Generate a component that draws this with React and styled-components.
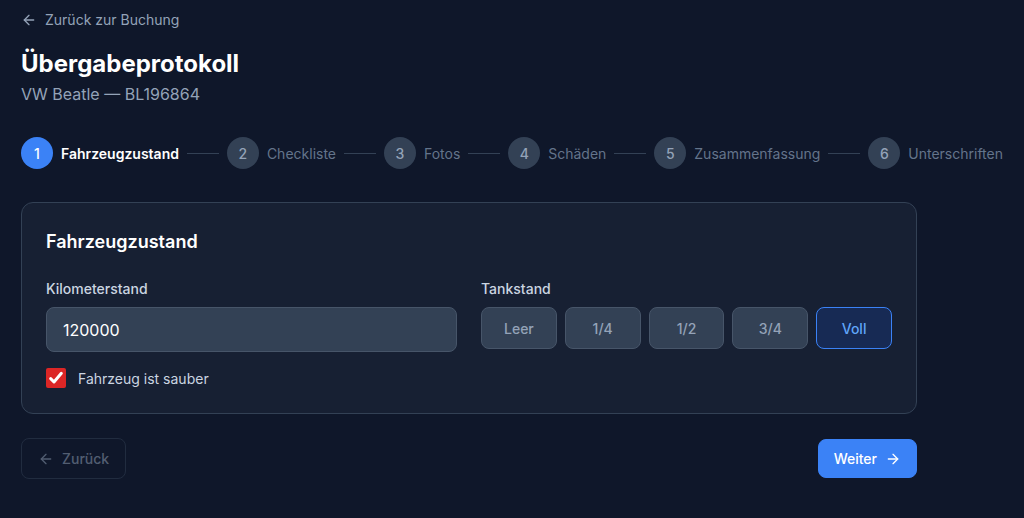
import React from "react";
import styled, { createGlobalStyle } from "styled-components";

const GlobalStyle = createGlobalStyle`
  html, body {
    margin: 0;
    background: #0f172a;
    font-family: Inter, "Noto Sans", sans-serif;
    color: #f1f5f9;
  }
  * { box-sizing: border-box; }
`;

const Page = styled.div`
  min-height: 518px;
  padding: 12px 21px 20px;
`;

const BackLink = styled.a`
  display: inline-flex;
  align-items: center;
  gap: 8px;
  font-size: 14px;
  line-height: 16px;
  color: #94a3b8;
  text-decoration: none;
`;

const Title = styled.h1`
  margin: 16px 0 0;
  font-size: 24px;
  line-height: 32px;
  font-weight: 700;
  color: #ffffff;
`;

const Subtitle = styled.p`
  margin: 2px 0 0;
  font-size: 16px;
  line-height: 24px;
  color: #94a3b8;
`;

const Stepper = styled.div`
  display: flex;
  align-items: center;
  gap: 8px;
  margin-top: 31px;
  white-space: nowrap;
`;

const Step = styled.div`
  display: flex;
  align-items: center;
  gap: 8px;
`;

const StepNumber = styled.span`
  width: 32px;
  height: 32px;
  border-radius: 50%;
  display: flex;
  align-items: center;
  justify-content: center;
  font-size: 14px;
  font-weight: 500;
  background: ${p => (p.$active ? "#3b82f6" : "#334155")};
  color: ${p => (p.$active ? "#ffffff" : "#94a3b8")};
`;

const StepLabel = styled.span`
  font-size: 14px;
  font-weight: ${p => (p.$active ? 600 : 400)};
  color: ${p => (p.$active ? "#ffffff" : "#64748b")};
`;

const StepLine = styled.span`
  width: 32px;
  height: 1px;
  background: #334155;
`;

const Card = styled.section`
  max-width: 896px;
  margin-top: 33px;
  padding: 25px 24px;
  background: #172033;
  border: 1px solid #334155;
  border-radius: 12px;
`;

const CardTitle = styled.h2`
  margin: 0;
  font-size: 18px;
  line-height: 28px;
  font-weight: 600;
  color: #ffffff;
`;

const FieldGrid = styled.div`
  display: grid;
  grid-template-columns: 1fr 1fr;
  gap: 24px;
  margin-top: 23px;
`;

const Field = styled.div`
  display: flex;
  flex-direction: column;
`;

const Label = styled.label`
  font-size: 14px;
  line-height: 20px;
  font-weight: 500;
  color: #cbd5e1;
  margin-bottom: 8px;
`;

const Input = styled.input`
  height: 45px;
  padding: 0 16px;
  background: #334155;
  border: 1px solid #475569;
  border-radius: 8px;
  font: inherit;
  font-size: 16px;
  color: #ffffff;
  outline: none;
`;

const TankRow = styled.div`
  display: grid;
  grid-template-columns: repeat(5, 1fr);
  gap: 8px;
`;

const TankButton = styled.button`
  height: 42px;
  border-radius: 8px;
  font: inherit;
  font-size: 14px;
  font-weight: 500;
  cursor: pointer;
  background: ${p => (p.$selected ? "#172a54" : "#334155")};
  border: 1px solid ${p => (p.$selected ? "#3b82f6" : "#475569")};
  color: ${p => (p.$selected ? "#60a5fa" : "#94a3b8")};
`;

const CheckRow = styled.label`
  display: flex;
  align-items: center;
  gap: 12px;
  margin-top: 16px;
  font-size: 14px;
  color: #cbd5e1;
`;

const CheckBox = styled.span`
  width: 20px;
  height: 20px;
  border-radius: 2px;
  background: #dc2626;
  display: flex;
  align-items: center;
  justify-content: center;
`;

const Footer = styled.div`
  max-width: 896px;
  display: flex;
  justify-content: space-between;
  align-items: center;
  margin-top: 24px;
`;

const NavButton = styled.button`
  display: inline-flex;
  align-items: center;
  gap: 8px;
  height: ${p => (p.$primary ? "39px" : "41px")};
  padding: 0 ${p => (p.$primary ? "15px" : "16px")};
  border-radius: 8px;
  font: inherit;
  font-size: 14px;
  font-weight: 500;
  cursor: pointer;
  background: ${p => (p.$primary ? "#3b82f6" : "transparent")};
  border: 1px solid ${p => (p.$primary ? "#3b82f6" : "#334155")};
  color: ${p => (p.$primary ? "#ffffff" : "#94a3b8")};
  &:disabled {
    opacity: 0.5;
    cursor: default;
  }
`;

const ArrowLeft = ({ size = 16 }) => (
  <svg width={size} height={size} viewBox="0 0 24 24" fill="none" stroke="currentColor" strokeWidth="2" strokeLinecap="round" strokeLinejoin="round">
    <path d="m12 19-7-7 7-7" />
    <path d="M19 12H5" />
  </svg>
);

const ArrowRight = ({ size = 16 }) => (
  <svg width={size} height={size} viewBox="0 0 24 24" fill="none" stroke="currentColor" strokeWidth="2" strokeLinecap="round" strokeLinejoin="round">
    <path d="M5 12h14" />
    <path d="m12 5 7 7-7 7" />
  </svg>
);

const steps = ["Fahrzeugzustand", "Checkliste", "Fotos", "Schäden", "Zusammenfassung", "Unterschriften"];
const tankLevels = ["Leer", "1/4", "1/2", "3/4", "Voll"];

export default function App() {
  return (
    <Page>
      <GlobalStyle />
      <BackLink href="#">
        <ArrowLeft /> Zurück zur Buchung
      </BackLink>
      <Title>Übergabeprotokoll</Title>
      <Subtitle>VW Beatle — BL196864</Subtitle>

      <Stepper>
        {steps.map((label, i) => (
          <React.Fragment key={label}>
            {i > 0 && <StepLine />}
            <Step>
              <StepNumber $active={i === 0}>{i + 1}</StepNumber>
              <StepLabel $active={i === 0}>{label}</StepLabel>
            </Step>
          </React.Fragment>
        ))}
      </Stepper>

      <Card>
        <CardTitle>Fahrzeugzustand</CardTitle>
        <FieldGrid>
          <Field>
            <Label>Kilometerstand</Label>
            <Input defaultValue="120000" />
            <CheckRow>
              <CheckBox>
                <svg width="16" height="16" viewBox="0 0 24 24" fill="none" stroke="#fff" strokeWidth="4.5" strokeLinecap="round" strokeLinejoin="round">
                  <path d="M4 13l5 5L20 5" />
                </svg>
              </CheckBox>
              Fahrzeug ist sauber
            </CheckRow>
          </Field>
          <Field>
            <Label>Tankstand</Label>
            <TankRow>
              {tankLevels.map(level => (
                <TankButton key={level} $selected={level === "Voll"}>{level}</TankButton>
              ))}
            </TankRow>
          </Field>
        </FieldGrid>
      </Card>

      <Footer>
        <NavButton disabled>
          <ArrowLeft /> Zurück
        </NavButton>
        <NavButton $primary>
          Weiter <ArrowRight />
        </NavButton>
      </Footer>
    </Page>
  );
}
